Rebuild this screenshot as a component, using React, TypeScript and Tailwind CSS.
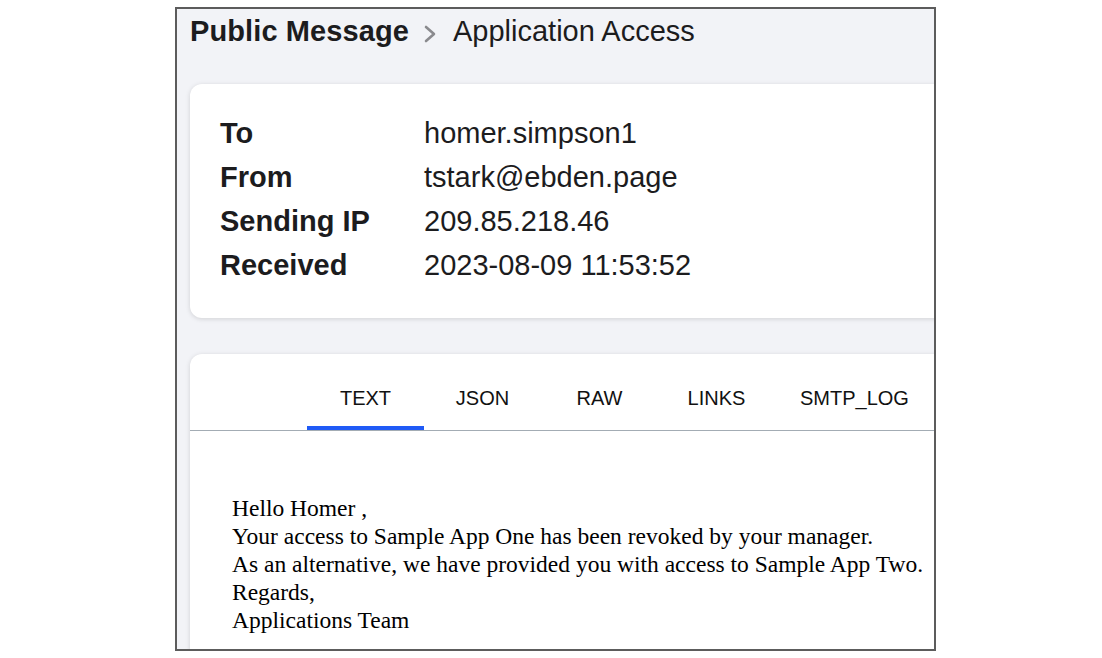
import React from "react";

const sans = { fontFamily: '"Liberation Sans", Arial, sans-serif' };

export default function App() {
  const rows: [string, string][] = [
    ["To", "homer.simpson1"],
    ["From", "tstark@ebden.page"],
    ["Sending IP", "209.85.218.46"],
    ["Received", "2023-08-09 11:53:52"],
  ];
  const tabs = ["TEXT", "JSON", "RAW", "LINKS", "SMTP_LOG"];
  return (
    <div className="w-[1102px] h-[658px] bg-white pt-[7px] pl-[175px]">
      <div
        className="w-[761px] h-[644px] border-2 border-[#5c5c5c] bg-[#f2f3f7] overflow-hidden pl-[13px] pt-[5px]"
        style={sans}
      >
        <div className="flex items-center h-[36px] text-[29px] text-[#1c1c1e] whitespace-nowrap">
          <span className="font-bold tracking-[0.1px]">Public Message</span>
          <svg width="14" height="18" viewBox="0 0 14 18" className="ml-[14px] mr-[16px] mt-[3px]">
            <path d="M3 2 L11 9 L3 16" fill="none" stroke="#8a8a8e" strokeWidth="2.6" strokeLinecap="round" strokeLinejoin="round" />
          </svg>
          <span>Application Access</span>
        </div>

        <div className="mt-[34px] w-[820px] bg-white rounded-[12px] shadow-[0_1px_5px_rgba(0,0,0,0.14)] pt-[27px] pb-[31px] pl-[30px] text-[29px] text-[#1c1c1e]">
          {rows.map(([k, v]) => (
            <div key={k} className="flex h-[44px] leading-[44px] whitespace-nowrap">
              <div className="w-[204px] font-bold">{k}</div>
              <div>{v}</div>
            </div>
          ))}
        </div>

        <div className="mt-[36px] w-[820px] h-[400px] bg-white rounded-t-[12px] shadow-[0_1px_5px_rgba(0,0,0,0.14)]">
          <div className="flex pl-[117px] border-b border-[#a3acb4] h-[77px]">
            {tabs.map((t, i) => (
              <div
                key={t}
                className={
                  "h-[76px] min-w-[117px] px-[25px] pt-[32px] text-center text-[20px] leading-[24px] text-[#111] " +
                  (i === 0 ? "border-b-4 border-[#1f5af6]" : "")
                }
              >
                {t}
              </div>
            ))}
          </div>
          <div
            className="pt-[63px] pl-[42px] text-[23.5px] leading-[28px] text-black whitespace-nowrap"
            style={{ fontFamily: '"Liberation Serif", "Times New Roman", serif' }}
          >
            <div>Hello Homer ,</div>
            <div>Your access to Sample App One has been revoked by your manager.</div>
            <div>As an alternative, we have provided you with access to Sample App Two.</div>
            <div>Regards,</div>
            <div>Applications Team</div>
          </div>
        </div>
      </div>
    </div>
  );
}
